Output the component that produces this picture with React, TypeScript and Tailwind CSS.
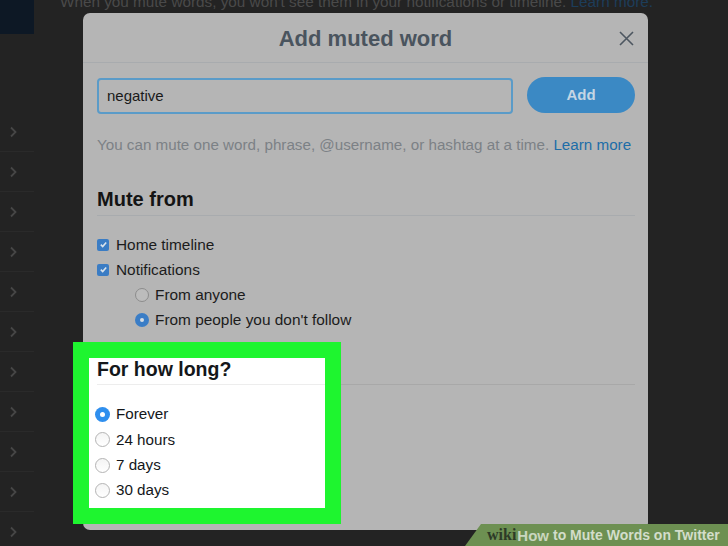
import { ReactNode } from "react";

const font = { fontFamily: '"Liberation Sans", Arial, sans-serif' };

function Chevron() {
  return (
    <svg width="8" height="12" viewBox="0 0 8 12" fill="none">
      <path d="M2 1.5 L6.5 6 L2 10.5" stroke="#474747" strokeWidth="1.8" />
    </svg>
  );
}

function DimCheckbox({ label }: { label: string }) {
  return (
    <div className="flex h-[25px] items-center">
      <span className="flex h-[12px] w-[12px] items-center justify-center rounded-[2px] bg-[#3a7cc4]">
        <svg width="9" height="9" viewBox="0 0 10 10" fill="none">
          <path d="M2 5.2 L4.1 7.3 L8 2.8" stroke="#d9e3ec" strokeWidth="1.8" />
        </svg>
      </span>
      <span className="ml-[7px] text-[15.4px] text-[#1c1c1c]">{label}</span>
    </div>
  );
}

function DimRadio({ label, checked }: { label: string; checked?: boolean }) {
  return (
    <div className="flex h-[25px] items-center pl-[38px]">
      {checked ? (
        <span className="flex h-[14px] w-[14px] items-center justify-center rounded-full bg-[#3a7dc6]">
          <span className="h-[4px] w-[4px] rounded-full bg-[#d6dde4]" />
        </span>
      ) : (
        <span className="h-[14px] w-[14px] rounded-full border border-[#8c8c8c] bg-[#bcbcbc]" />
      )}
      <span className="ml-[6px] text-[15.4px] text-[#1c1c1c]">{label}</span>
    </div>
  );
}

function Radio({ label, checked }: { label: string; checked?: boolean }) {
  return (
    <div className="-ml-[2px] flex h-[25.3px] items-center">
      {checked ? (
        <span className="flex h-[15px] w-[15px] items-center justify-center rounded-full bg-[#2f8fee]">
          <span className="h-[5px] w-[5px] rounded-full bg-white" />
        </span>
      ) : (
        <span className="h-[15px] w-[15px] rounded-full border border-[#b4b4b4] bg-gradient-to-b from-[#f4f4f4] to-white" />
      )}
      <span className="ml-[6px] text-[15.2px] text-[#14171a]">{label}</span>
    </div>
  );
}

function SidebarRow({ children }: { children?: ReactNode }) {
  return (
    <div className="flex h-[40px] items-center border-b border-[#2a2a2a] pl-[9px]">
      {children}
    </div>
  );
}

export default function App() {
  return (
    <div
      className="relative h-[546px] w-[728px] overflow-hidden bg-[#232323]"
      style={font}
    >
      {/* page behind the modal */}
      <div className="flex h-full">
        <div className="w-[34px] shrink-0">
          <div className="h-[34px] bg-[#0d1825]" />
          <div className="mt-[78px]">
            {Array.from({ length: 11 }).map((_, i) => (
              <SidebarRow key={i}>
                <Chevron />
              </SidebarRow>
            ))}
          </div>
        </div>
        <div className="flex-1 pl-[26px]">
          <p className="-mt-[8px] whitespace-nowrap text-[15.3px] leading-[20px] text-[#4a4a4a]">
            When you mute words, you won't see them in your notifications or
            timeline. <span className="text-[#1d3d5a]">Learn more.</span>
          </p>
        </div>
      </div>

      {/* modal */}
      <div className="absolute left-[83px] top-[13px] h-[517px] w-[565px] rounded-[7px] bg-[#b5b5b5]">
        <div className="relative flex h-[50px] items-center justify-center border-b border-[#a8abae] pt-[2px]">
          <h1 className="text-[22px] font-bold text-[#4a545e]">Add muted word</h1>
          <svg
            className="absolute right-[14px] top-[18px]"
            width="15"
            height="15"
            viewBox="0 0 15 15"
            fill="none"
          >
            <path d="M1 1 L14 14 M14 1 L1 14" stroke="#4d5660" strokeWidth="1.6" />
          </svg>
        </div>

        <div className="pl-[14px] pr-[13px]">
          <div className="mt-[15px] flex gap-[14px]">
            <div className="flex h-[36px] w-[416px] items-center rounded-[4px] border-2 border-[#5a9bc8] pl-[8px] text-[15px] text-[#1a1a1a]">
              negative
            </div>
            <button className="-mt-px flex h-[36px] flex-1 items-center justify-center rounded-full bg-[#3b89c4] text-[15px] font-bold text-[#c4d6e4]">
              Add
            </button>
          </div>

          <p className="mt-[21px] whitespace-nowrap text-[15.2px] leading-[20px] text-[#7c8186]">
            You can mute one word, phrase, @username, or hashtag at a time.{" "}
            <span className="text-[#1d6da8]">Learn more</span>
          </p>

          <h2 className="mt-[32px] border-b border-[#a8abae] pb-[4px] text-[20px] font-bold leading-[24px] text-[#141414]">
            Mute from
          </h2>
          <div className="mt-[16px]">
            <DimCheckbox label="Home timeline" />
            <DimCheckbox label="Notifications" />
            <DimRadio label="From anyone" />
            <DimRadio label="From people you don't follow" checked />
          </div>

          <div className="relative mt-[25px]">
            <div className="absolute -left-[24px] -top-[15px] h-[182px] w-[268px] border-[16px] border-transparent">
              <div className="h-full w-full bg-white" />
            </div>
            <div className="relative">
              <h2 className="border-b border-[rgba(0,0,0,0.07)] pb-[3px] text-[19.5px] font-bold leading-[24px] text-[#14171a]">
                For how long?
              </h2>
              <div className="mt-[17px]">
                <Radio label="Forever" checked />
                <Radio label="24 hours" />
                <Radio label="7 days" />
                <Radio label="30 days" />
              </div>
            </div>
            <div className="absolute -left-[24px] -top-[15px] h-[182px] w-[268px] border-[16px] border-[#1ef52f]" />
          </div>
        </div>
      </div>

      {/* watermark */}
      <div className="absolute bottom-0 right-0 flex h-[22px] w-[263px] items-center whitespace-nowrap bg-[#6d9052] pl-[22px] [clip-path:polygon(16px_0,100%_0,100%_100%,0_100%)]">
        <span
          className="text-[16px] font-bold leading-none text-[#2d3a27]"
          style={{ fontFamily: '"Liberation Serif", "DejaVu Serif", serif' }}
        >
          wiki
        </span>
        <span className="ml-[1px] text-[15px] font-bold leading-none text-[#c9d6bf]">
          How
        </span>
        <span className="ml-[4px] text-[14px] font-bold leading-none text-[#d3ddca]">
          to Mute Words on Twitter
        </span>
      </div>
    </div>
  );
}
